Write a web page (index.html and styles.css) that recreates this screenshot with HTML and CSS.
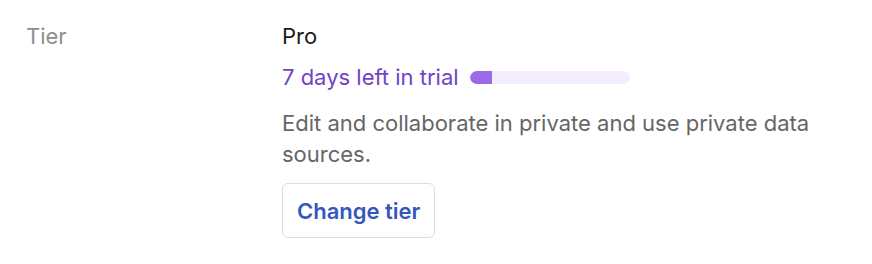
FILE: index.html
```html
<!DOCTYPE html>
<html lang="en">
<head>
    <meta charset="UTF-8">
    <title>Tier</title>
    <link rel="stylesheet" href="styles.css">
</head>
<body>
    <div class="setting-row">
        <div class="setting-label">Tier</div>
        <div class="setting-value">
            <div class="tier-name">Pro</div>
            <div class="trial">
                <span class="trial-text">7 days left in trial</span>
                <div class="trial-bar"><div class="trial-fill" style="width: 14%"></div></div>
            </div>
            <p class="tier-desc">Edit and collaborate in private and use private data sources.</p>
            <button class="change-btn">Change tier</button>
        </div>
    </div>
</body>
</html>
```

FILE: styles.css
```css
body {
    margin: 0;
    font-family: Inter, 'Noto Sans', sans-serif;
    background-color: #fff;
}

.setting-row {
    display: grid;
    grid-template-columns: 256px 560px;
    padding: 22px 0 0 26px;
    font-size: 22px;
}

.setting-label {
    color: #8e8e8e;
    line-height: 28px;
}

.tier-name {
    color: #1a1a1a;
    line-height: 28px;
}

.trial {
    display: flex;
    align-items: center;
    gap: 11px;
    margin-top: 13px;
    line-height: 28px;
}

.trial-text {
    color: #6f45c4;
}

.trial-bar {
    width: 160px;
    height: 13px;
    border-radius: 7px;
    background-color: #f3edfd;
    overflow: hidden;
}

.trial-fill {
    height: 100%;
    background-color: #9b6ae8;
    border-radius: 7px 0 0 7px;
}

.tier-desc {
    margin: 17px 0 0;
    color: #666;
    line-height: 31px;
    width: 545px;
}

.change-btn {
    margin-top: 13px;
    padding: 0 14px;
    height: 55px;
    font-family: inherit;
    font-size: 22px;
    font-weight: 600;
    color: #3358bd;
    background-color: #fff;
    border: 1px solid #ddd;
    border-radius: 6px;
}
```
